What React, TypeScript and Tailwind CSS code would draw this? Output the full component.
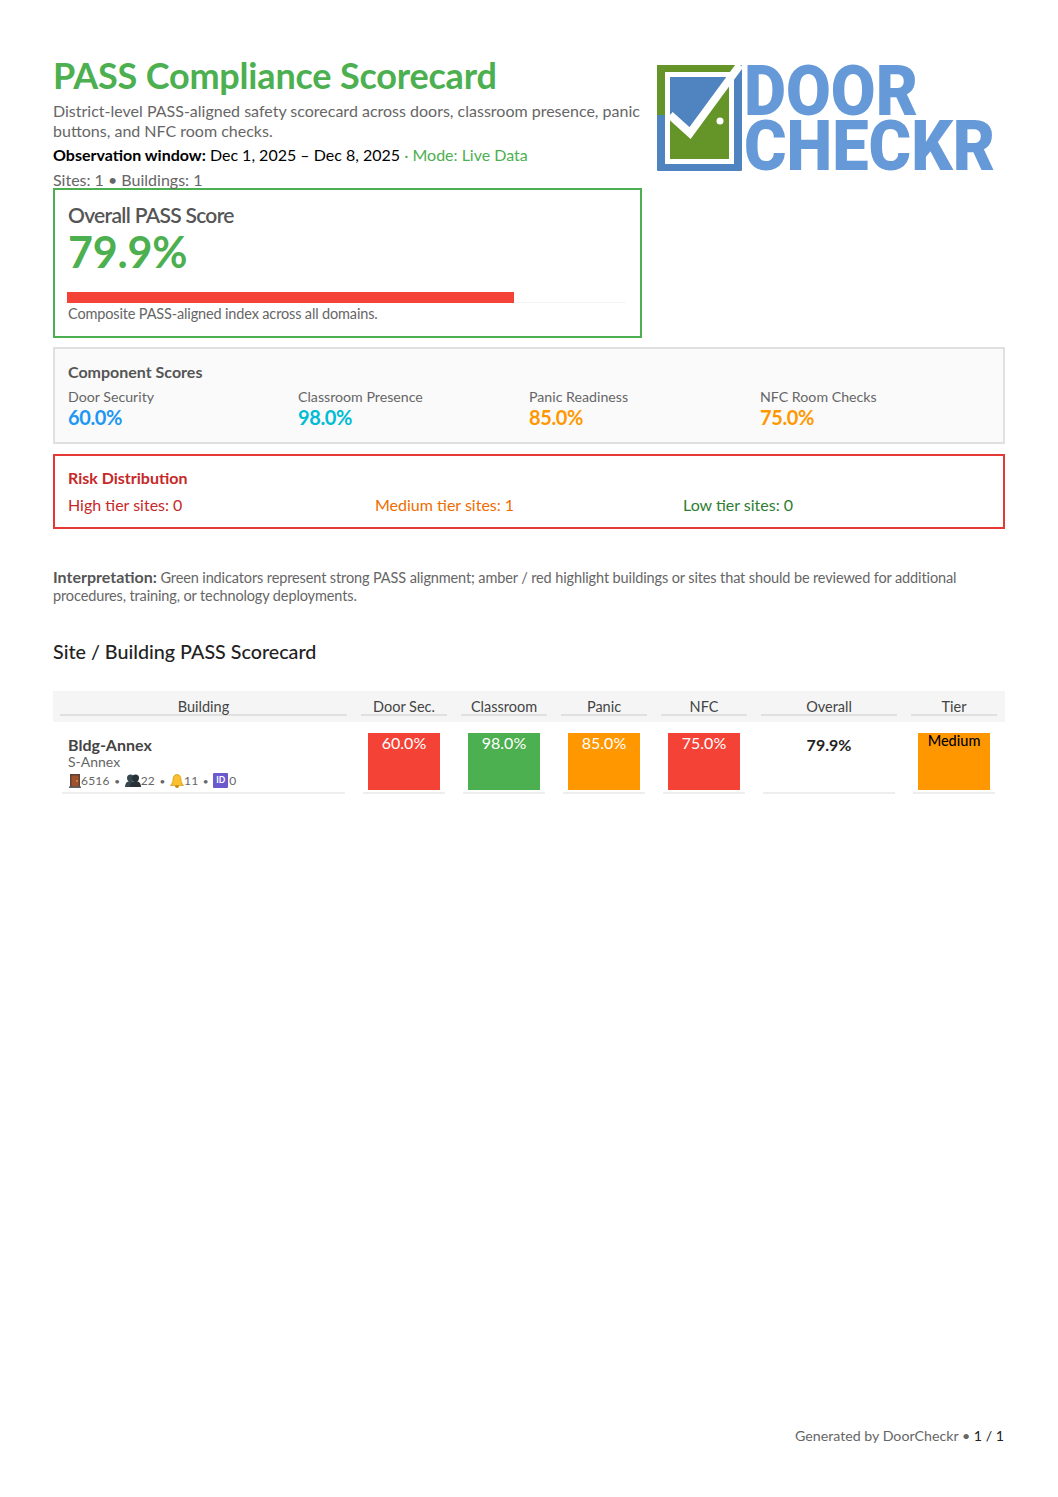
import type { ReactNode } from "react";

const scores = [
  { label: "Door Security", value: "60.0%", color: "text-[#2196f3]" },
  { label: "Classroom Presence", value: "98.0%", color: "text-[#00bcd4]" },
  { label: "Panic Readiness", value: "85.0%", color: "text-[#ff9800]" },
  { label: "NFC Room Checks", value: "75.0%", color: "text-[#ff9800]" },
];

const rowCols = "grid grid-cols-[287px_86px_86px_86px_86px_136px_86px] gap-x-[14px] px-[7px]";

function Logo() {
  return (
    <svg viewBox="0 0 340 108" className="block h-[108px] w-[340px] overflow-visible">
      <rect x="0" y="0" width="85" height="106" rx="1" fill="#5084c0" />
      <path d="M0 0H80L72 8H8V50H0Z" fill="#659429" />
      <rect x="10.5" y="9.5" width="64" height="87" fill="#659429" stroke="#ffffff" strokeWidth="5" />
      <path d="M13 12H72L33 70L13 50Z" fill="#5084c0" />
      <path d="M13 50L33 68L83 0" fill="none" stroke="#ffffff" strokeWidth="8" />
      <circle cx="63" cy="56" r="3.5" fill="#ffffff" />
      <text x="87" y="50" fontFamily="Roboto, sans-serif" fontWeight="900" fontSize="70" textLength="174" lengthAdjust="spacingAndGlyphs" fill="#6699d8">DOOR</text>
      <text x="87" y="105" fontFamily="Roboto, sans-serif" fontWeight="900" fontSize="70" textLength="251" lengthAdjust="spacingAndGlyphs" fill="#6699d8">CHECKR</text>
    </svg>
  );
}

function DoorIcon() {
  return (
    <svg viewBox="0 0 12 14" className="h-[14px] w-[12px] shrink-0">
      <rect x="1" y="0" width="10" height="13" fill="#5d4037" />
      <rect x="2.5" y="1.5" width="7" height="11" fill="#a0522d" />
      <circle cx="8" cy="7" r="0.8" fill="#f5c242" />
      <rect x="0" y="12.5" width="12" height="1.5" fill="#616161" />
    </svg>
  );
}

function PeopleIcon() {
  return (
    <svg viewBox="0 0 16 13" className="h-[13px] w-[16px] shrink-0">
      <circle cx="5.5" cy="4" r="3.5" fill="#37474f" />
      <circle cx="10.5" cy="4" r="3.5" fill="#263238" />
      <path d="M0 13C0 8.5 3 7 5.5 7S11 8.5 11 13Z" fill="#37474f" />
      <path d="M5 13C5 8.5 8 7 10.5 7S16 8.5 16 13Z" fill="#263238" />
    </svg>
  );
}

function BellIcon() {
  return (
    <svg viewBox="0 0 14 14" className="h-[14px] w-[14px] shrink-0">
      <path d="M7 0.5C4 0.5 3 3 3 5.5C3 8.5 1.5 10 0.5 11.5H13.5C12.5 10 11 8.5 11 5.5C11 3 10 0.5 7 0.5Z" fill="#fbc02d" stroke="#c98a00" strokeWidth="0.6" />
      <ellipse cx="7" cy="12.6" rx="2" ry="1.3" fill="#c98a00" />
    </svg>
  );
}

function IdIcon() {
  return (
    <span className="flex h-[15px] w-[15px] shrink-0 items-center justify-center rounded-[1px] bg-[#6a5acd] text-[8.5px] font-bold leading-none tracking-normal text-white">
      ID
    </span>
  );
}

function Dot() {
  return <span className="mx-[4.5px] text-[10px]">•</span>;
}

function HeaderCell({ children }: { children: ReactNode }) {
  return (
    <div className="h-[25px] border-b-2 border-[#e0e0e0] pt-[7px] text-center text-[14.5px] leading-[17px] text-[#444]">
      {children}
    </div>
  );
}

function ScoreCell({ value, color }: { value: string; color: string }) {
  return (
    <div className="mx-[2px] h-[72px] border-b-2 border-[#eeeeee] px-[5px] pt-[11px]">
      <div className={`h-[57px] pt-[1px] text-center text-[16px] leading-[17px] text-white ${color}`}>{value}</div>
    </div>
  );
}

export default function App() {
  return (
    <div className="relative h-[1497px] w-[1058px] bg-white px-[53px] pt-[56px] font-['Lato',sans-serif] text-[#555]">
      <div className="flex">
        <div className="h-[132px] w-[589px] shrink-0">
          <h1 className="text-[36px] font-bold leading-[38px] tracking-[-0.2px] text-[#4caf50]">PASS Compliance Scorecard</h1>
          <p className="mt-[7px] text-[16px] leading-[20px] text-[#666]">
            District-level PASS-aligned safety scorecard across doors, classroom presence, panic buttons, and NFC room checks.
          </p>
          <p className="mt-[4px] text-[16px] leading-[20px] text-black">
            <span className="font-bold">Observation window:</span> Dec 1, 2025 – Dec 8, 2025{" "}
            <span className="text-[#4caf50]">· Mode: Live Data</span>
          </p>
          <p className="mt-[5px] text-[16px] leading-[20px] text-[#666]">Sites: 1 • Buildings: 1</p>
        </div>
        <div className="ml-[15px] pt-[9px]">
          <Logo />
        </div>
      </div>

      <div className="h-[150px] w-[589px] border-2 border-[#4caf50] px-[13px] pt-[12px]">
        <div className="text-[21px] font-semibold leading-[25px] tracking-[-0.7px] text-[#555]">Overall PASS Score</div>
        <div className="text-[43px] font-bold leading-[50px] tracking-[-0.2px] text-[#4caf50]">79.9%</div>
        <div className="-ml-px mt-[15px] h-[11px] w-[559px] border-b border-[#f5f5f5]">
          <div className="h-[11px] w-[447px] bg-[#f44336]" />
        </div>
        <div className="mt-[2px] text-[14.5px] leading-[18px] tracking-[-0.15px] text-[#666]">Composite PASS-aligned index across all domains.</div>
      </div>

      <div className="mt-[9px] h-[97px] border-2 border-[#e0e0e0] bg-[#fafafa] px-[13px] pt-[13px]">
        <div className="text-[16px] font-bold leading-[20px] text-[#555]">Component Scores</div>
        <div className="mt-[6px] grid grid-cols-[230px_231px_231px_1fr]">
          {scores.map((s) => (
            <div key={s.label}>
              <div className="text-[14.2px] leading-[17px] text-[#666]">{s.label}</div>
              <div className={`text-[20px] font-bold leading-[24px] tracking-[-0.4px] ${s.color}`}>{s.value}</div>
            </div>
          ))}
        </div>
      </div>

      <div className="mt-[10px] h-[75px] border-2 border-[#e53935] px-[13px] pt-[12px]">
        <div className="text-[16px] font-bold leading-[20px] text-[#c62828]">Risk Distribution</div>
        <div className="mt-[7px] grid grid-cols-[307px_308px_1fr] text-[16px] leading-[20px]">
          <div className="text-[#c62828]">High tier sites: 0</div>
          <div className="text-[#ef6c00]">Medium tier sites: 1</div>
          <div className="text-[#2e7d32]">Low tier sites: 0</div>
        </div>
      </div>

      <p className="mt-[39px] text-[14.5px] leading-[18px] tracking-[-0.12px] text-[#666]">
        <span className="text-[16px] font-bold tracking-normal text-[#555]">Interpretation:</span> Green indicators represent strong PASS alignment; amber / red highlight buildings or sites that should be reviewed for additional procedures, training, or technology deployments.
      </p>

      <h2 className="mt-[35px] text-[19.7px] font-medium leading-[24px] text-[#222]">Site / Building PASS Scorecard</h2>

      <div className="mt-[27px]">
        <div className={`${rowCols} h-[31px] bg-[#f5f5f5]`}>
          <HeaderCell>Building</HeaderCell>
          <HeaderCell>Door Sec.</HeaderCell>
          <HeaderCell>Classroom</HeaderCell>
          <HeaderCell>Panic</HeaderCell>
          <HeaderCell>NFC</HeaderCell>
          <HeaderCell>Overall</HeaderCell>
          <HeaderCell>Tier</HeaderCell>
        </div>
        <div className={rowCols}>
          <div className="mx-[2px] h-[72px] border-b-2 border-[#eeeeee] px-[6px] pt-[13px]">
            <div className="text-[16px] font-bold leading-[19px] text-[#444]">Bldg-Annex</div>
            <div className="text-[14px] leading-[16px] text-[#666]">S-Annex</div>
            <div className="ml-px mt-[3px] flex items-center text-[12px] leading-[14px] tracking-[0.2px] text-[#666]">
              <DoorIcon />
              <span>6516</span>
              <Dot />
              <PeopleIcon />
              <span>22</span>
              <Dot />
              <BellIcon />
              <span>11</span>
              <Dot />
              <IdIcon />
              <span className="ml-px">0</span>
            </div>
          </div>
          <ScoreCell value="60.0%" color="bg-[#f44336]" />
          <ScoreCell value="98.0%" color="bg-[#4caf50]" />
          <ScoreCell value="85.0%" color="bg-[#ff9800]" />
          <ScoreCell value="75.0%" color="bg-[#f44336]" />
          <div className="mx-[2px] h-[72px] border-b-2 border-[#eeeeee] pt-[14px] text-center text-[16px] font-bold leading-[18px] text-[#222]">
            79.9%
          </div>
          <div className="mx-[2px] h-[72px] border-b-2 border-[#eeeeee] px-[5px] pt-[11px]">
            <div className="h-[57px] bg-[#ff9800] text-center text-[14.5px] font-medium leading-[15px] text-black">Medium</div>
          </div>
        </div>
      </div>

      <div className="absolute bottom-[52px] right-[54px] text-[14.2px] leading-[18px] text-[#666]">
        Generated by DoorCheckr • <span className="text-[#222]">1 / 1</span>
      </div>
    </div>
  );
}
